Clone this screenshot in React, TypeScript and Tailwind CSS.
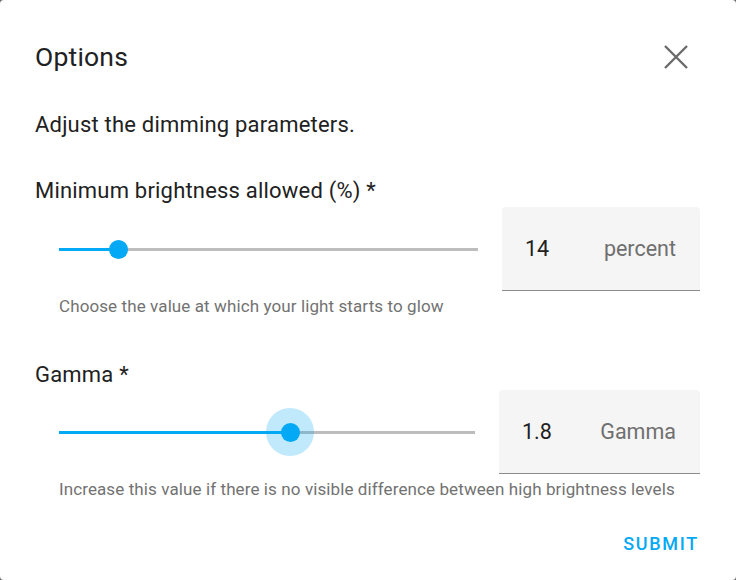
import React from "react";

function Slider({ pct, halo, trackRight }: { pct: number; halo?: boolean; trackRight: number }) {
  return (
    <div className="relative flex-1 h-[48px] flex items-center" style={{ marginLeft: 24, marginRight: trackRight }}>
      <div className="relative w-full h-[3px] bg-[#bdbdbd]">
        <div className="absolute left-0 top-0 h-full bg-[#03a9f4]" style={{ width: `${pct}%` }} />
        {halo && (
          <div
            className="absolute top-1/2 w-[48px] h-[48px] -mt-[24px] -ml-[24px] rounded-full bg-[#03a9f4]/25"
            style={{ left: `${pct}%` }}
          />
        )}
        <div
          className="absolute top-1/2 w-[19px] h-[19px] -mt-[9.5px] -ml-[9.5px] rounded-full bg-[#03a9f4]"
          style={{ left: `${pct}%` }}
        />
      </div>
    </div>
  );
}

function Field({ value, unit, width }: { value: string; unit: string; width: number }) {
  return (
    <div
      className="h-[84px] bg-[#f5f5f5] rounded-t-[4px] border-b border-[#8c8c8c] flex items-center pl-[23px] pr-[24px] pt-[2px] text-[21.5px]"
      style={{ width }}
    >
      <span className="text-[#212121] flex-1">{value}</span>
      <span className="text-[#6f6f6f]">{unit}</span>
    </div>
  );
}

export default function App() {
  return (
    <div className="w-[736px] h-[580px] bg-[#6b6b6b]" style={{ fontFamily: "Roboto, 'Noto Sans', sans-serif" }}>
      <div className="w-full h-full bg-white rounded-[4px] pl-[35px] pr-[36px] pt-[41px] flex flex-col">
        <div className="h-[32px] flex items-center justify-between">
          <h2 className="text-[26.5px] text-[#212121] font-normal tracking-[0.2px]">Options</h2>
          <svg width="24" height="24" viewBox="0 0 24 24" className="mr-[12px]">
            <path d="M1 1 L23 23 M23 1 L1 23" stroke="#6b6b6b" strokeWidth="2.4" fill="none" />
          </svg>
        </div>
        <p className="mt-[40px] h-[24px] leading-[24px] text-[22px] text-[#212121] tracking-[0.2px] whitespace-nowrap">
          Adjust the dimming parameters.
        </p>
        <p className="mt-[42px] h-[24px] leading-[24px] text-[22px] text-[#212121] tracking-[0.2px] whitespace-nowrap">
          Minimum brightness allowed (%) *
        </p>
        <div className="mt-[4px] flex items-center">
          <Slider pct={14.1} trackRight={24} />
          <Field value="14" unit="percent" width={198} />
        </div>
        <p className="mt-[5px] ml-[24px] h-[20px] leading-[20px] text-[17px] text-[#727272] tracking-[0.1px] whitespace-nowrap">
          Choose the value at which your light starts to glow
        </p>
        <p className="mt-[47px] h-[24px] leading-[24px] text-[22px] text-[#212121] tracking-[0.2px]">
          Gamma *
        </p>
        <div className="mt-[3px] flex items-center">
          <Slider pct={55.6} halo trackRight={24} />
          <Field value="1.8" unit="Gamma" width={201} />
        </div>
        <p className="mt-[5px] ml-[24px] h-[20px] leading-[20px] text-[17px] text-[#727272] tracking-[0.1px] whitespace-nowrap">
          Increase this value if there is no visible difference between high brightness levels
        </p>
        <div className="mt-[26px] flex justify-end">
          <button className="h-[36px] text-[18px] font-medium tracking-[1.7px] text-[#03a9f4] uppercase mr-[1px]">
            Submit
          </button>
        </div>
      </div>
    </div>
  );
}
